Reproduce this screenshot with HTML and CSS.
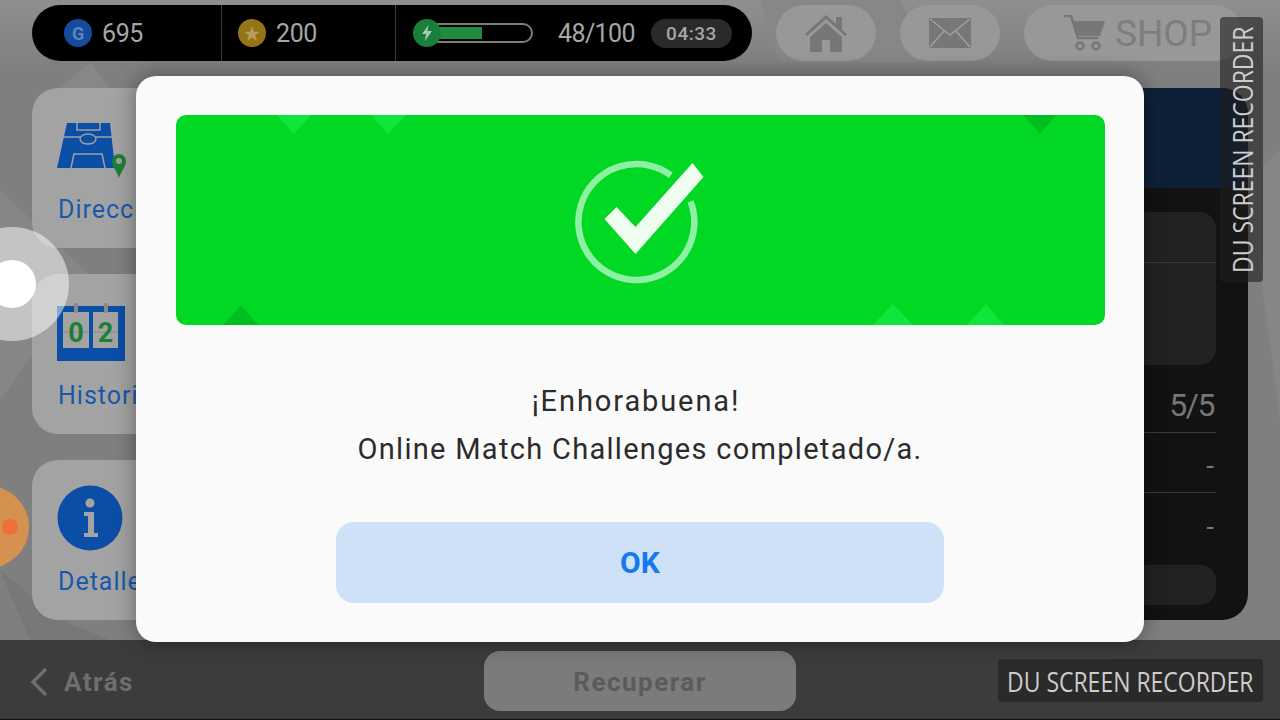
FILE: index.html
```html
<!DOCTYPE html>
<html lang="es">

<head>
    <meta charset="UTF-8">
    <meta name="viewport" content="width=device-width, initial-scale=1.0">
    <title>Online Match Challenges</title>
    <link rel="stylesheet" href="styles.css">
</head>

<body>
    <div class="screen">
        <svg class="backdrop" width="1280" height="640" viewBox="0 0 1280 640">
            <polygon points="0,190 90,275 0,400" fill="#868686" />
            <polygon points="60,88 110,88 90,62" fill="#878787" />
            <polygon points="1248,180 1280,150 1280,420" fill="#868686" />
            <polygon points="60,620 110,640 30,640 0,570" fill="#787878" />
            <polygon points="760,0 900,0 930,62 780,62" fill="#878787" />
        </svg>

        <header class="top">
            <div class="stats">
                <div class="stat stat-g">
                    <span class="coin coin-blue">G</span>
                    <span>695</span>
                </div>
                <div class="stat stat-gold">
                    <span class="coin coin-gold">★</span>
                    <span>200</span>
                </div>
                <div class="stat stat-energy">
                    <div class="energy">
                        <div class="energy-bar"><div class="energy-fill"></div></div>
                        <span class="coin coin-green">
                            <svg width="12" height="16" viewBox="0 0 12 16"><path d="M7.500 0 1 9h4l-1 7 7-10H6.500z" fill="#a9c9ae" /></svg>
                        </span>
                    </div>
                    <span class="energy-count">48/100</span>
                    <span class="timer">04:33</span>
                </div>
            </div>
            <button class="top-btn" aria-label="Inicio">
                <svg width="44" height="38" viewBox="0 0 44 38">
                    <path d="M1 20 22 1l10 9V3h6v13l5 4-2 2L22 5 3 22z" fill="#777" />
                    <path d="M6 23 22 9l16 14v15H26V26h-8v12H6z" fill="#777" />
                </svg>
            </button>
            <button class="top-btn" aria-label="Correo">
                <svg width="42" height="30" viewBox="0 0 42 30">
                    <path d="M0 0h42v30H0z" fill="#777" />
                    <path d="M1 1l20 16L41 1M1 29l14-16M41 29 27 13" fill="none" stroke="#a0a0a0" stroke-width="1.500" />
                </svg>
            </button>
            <button class="top-btn top-shop">
                <svg width="42" height="36" viewBox="0 0 42 36">
                    <path d="M0 1h7l7 22h20" fill="none" stroke="#777" stroke-width="2.500" />
                    <path d="M9 6h32l-5 15H14z" fill="#777" />
                    <circle cx="16" cy="31" r="3.500" fill="none" stroke="#777" stroke-width="2.500" />
                    <circle cx="32" cy="31" r="3.500" fill="none" stroke="#777" stroke-width="2.500" />
                </svg>
                <span>SHOP</span>
            </button>
        </header>

        <main class="middle">
            <nav class="side">
                <a class="card">
                    <div class="card-icon card-icon-pitch">
                        <svg width="69" height="55" viewBox="0 0 69 55">
                            <path d="M10 0h43l5 45H0z" fill="#0b4ea6" />
                            <path d="M6 14h50M20 0v7h23V0M14 45l3-14h28l3 14" fill="none" stroke="#a0a0a0" stroke-width="1.500" />
                            <ellipse cx="31" cy="16" rx="8" ry="5" fill="#0b4ea6" stroke="#a0a0a0" stroke-width="1.500" />
                            <path d="M55 38a7 7 0 0 1 14 0c0 6-4 8-7 17-3-9-7-11-7-17z" fill="#1c7f36" />
                            <circle cx="62" cy="38" r="3" fill="#a0a0a0" />
                        </svg>
                    </div>
                    <span class="card-label">Dirección</span>
                </a>
                <a class="card">
                    <div class="card-icon">
                        <svg width="68" height="58" viewBox="0 0 68 58">
                            <path d="M0 3h68v55H0z" fill="#0b4ea6" />
                            <path d="M6 9h26v36H6zM36 9h25v36H36z" fill="#a3a3a3" />
                            <path d="M6 29h26M36 29h25" stroke="#8a8a8a" stroke-width="1" />
                            <path d="M19 0v10M49 0v10" stroke="#8a8a8a" stroke-width="4" />
                            <text class="flip-num" x="19" y="39" text-anchor="middle">0</text>
                            <text class="flip-num" x="48.500" y="39" text-anchor="middle">2</text>
                        </svg>
                    </div>
                    <span class="card-label">Historial</span>
                </a>
                <a class="card">
                    <div class="card-icon">
                        <svg width="66" height="66" viewBox="0 0 66 66">
                            <circle cx="33" cy="33" r="32.500" fill="#0b4ea6" />
                            <circle cx="33" cy="18" r="4.500" fill="#a3a3a3" />
                            <path d="M27 27h10v21h4v4H27v-4h4V31h-4z" fill="#a3a3a3" />
                        </svg>
                    </div>
                    <span class="card-label">Detalles</span>
                </a>
            </nav>
            <section class="panel">
                <div class="panel-head"></div>
                <div class="panel-box">
                    <div class="panel-box-row"></div>
                </div>
                <div class="panel-row panel-row-big">5/5</div>
                <div class="panel-row">-</div>
                <div class="panel-row panel-row-last">-</div>
                <div class="panel-foot"></div>
            </section>
        </main>

        <footer class="bottom">
            <a class="back">
                <svg width="18" height="30" viewBox="0 0 18 30"><path d="M16 2 3 15l13 13" fill="none" stroke="#6e6e6e" stroke-width="3.500" /></svg>
                <span>Atrás</span>
            </a>
            <button class="recover">Recuperar</button>
        </footer>

        <div class="joystick"><div class="joystick-dot"></div></div>
        <div class="orange-btn"><div class="orange-dot"></div></div>

        <div class="modal">
            <div class="banner">
                <svg class="banner-bg" width="929" height="210" viewBox="0 0 929 210">
                    <polygon points="101,0 135,0 118,19" fill="#10e53c" />
                    <polygon points="195,0 230,0 212,19" fill="#10e53c" />
                    <polygon points="847,0 880,0 864,19" fill="#00bd20" />
                    <polygon points="47,210 82,210 65,190" fill="#00bd20" />
                    <polygon points="697,210 737,210 717,189" fill="#10e53c" />
                    <polygon points="791,210 828,210 810,189" fill="#10e53c" />
                </svg>
                <svg class="check" width="140" height="130" viewBox="0 0 140 130">
                    <path d="M100.800 20.300A58 58 0 1 0 120.600 46.400" fill="none" stroke="#8ef0a2" stroke-width="6.500" />
                    <path d="M34.500 64 46.500 52 65.500 72 122.500 8 133.500 22 65.500 99z" fill="#eefdf0" />
                </svg>
            </div>
            <p class="message"><span class="message-head">¡Enhorabuena!</span><br>Online Match Challenges completado/a.</p>
            <button class="ok">OK</button>
        </div>

        <div class="mark mark-side"><span class="mark-text">DU SCREEN RECORDER</span></div>
        <div class="mark mark-bottom"><span class="mark-text">DU SCREEN RECORDER</span></div>
    </div>
</body>

</html>
```

FILE: styles.css
```css
* {
    box-sizing: border-box;
}

body {
    margin: 0;
    font-family: 'Roboto', 'Liberation Sans', sans-serif;
}

button {
    font-family: inherit;
    border: none;
    padding: 0;
}

.screen {
    position: relative;
    width: 1280px;
    height: 720px;
    overflow: hidden;
    display: flex;
    flex-direction: column;
    background: linear-gradient(180deg, #8f8f8f 0, #7f7f7f 70px, #7f7f7f 100%);
}

.backdrop {
    position: absolute;
    top: 0;
    left: 0;
}

.top {
    position: relative;
    display: flex;
    gap: 24px;
    padding: 5px 0 0 32px;
    height: 61px;
}

.stats {
    display: flex;
    width: 720px;
    height: 56px;
    background: #000;
    border-radius: 28px;
    color: #a6a6a6;
    font-size: 25px;
    letter-spacing: -0.4px;
}

.stat {
    display: flex;
    align-items: center;
    gap: 10px;
    border-right: 1px solid #3a3a3a;
}

.stat-g {
    width: 190px;
    padding-left: 32px;
}

.stat-gold {
    width: 174px;
    padding-left: 16px;
}

.stat-energy {
    border-right: none;
    padding-left: 17px;
    gap: 0;
}

.coin {
    width: 28px;
    height: 28px;
    border-radius: 50%;
    display: flex;
    align-items: center;
    justify-content: center;
    flex-shrink: 0;
    font-size: 18px;
    font-weight: 700;
}

.coin-blue {
    background: #154a9c;
    color: #5d84bb;
}

.coin-gold {
    background: #947414;
    color: #b79e5c;
}

.coin-green {
    position: absolute;
    top: 0;
    left: 0;
    background: #1a7f3a;
}

.energy {
    position: relative;
    width: 120px;
    height: 28px;
    display: flex;
    align-items: center;
    padding-left: 14px;
}

.energy-bar {
    width: 106px;
    height: 20px;
    border: 2px solid #7d7d7d;
    border-radius: 0 10px 10px 0;
    padding: 2px 0 2px 2px;
}

.energy-fill {
    width: 51px;
    height: 100%;
    background: #1f8c40;
}

.energy-count {
    margin-left: 25px;
    letter-spacing: -0.6px;
}

.timer {
    margin-left: 16px;
    width: 81px;
    height: 29px;
    border-radius: 15px;
    background: #2a2a2a;
    font-size: 19px;
    font-weight: 500;
    letter-spacing: 0.5px;
    display: flex;
    align-items: center;
    justify-content: center;
}

.top-btn {
    width: 100px;
    height: 56px;
    border-radius: 28px;
    background: #989898;
    display: flex;
    align-items: center;
    justify-content: center;
}

.top-shop {
    width: 219px;
    gap: 9px;
    justify-content: flex-start;
    padding-left: 40px;
    color: #7d7d7d;
    font-size: 37px;
}

.middle {
    position: relative;
    flex: 1;
    display: flex;
    justify-content: space-between;
    padding: 27px 32px 20px;
}

.side {
    display: flex;
    flex-direction: column;
    gap: 26px;
    width: 200px;
}

.card {
    flex: 1;
    display: flex;
    flex-direction: column;
    align-items: flex-start;
    background: #a3a3a3;
    border-radius: 26px;
    padding: 23px 0 0 25px;
    color: #1858ab;
    font-size: 25px;
    letter-spacing: 1px;
}

.card-icon {
    height: 70px;
    display: flex;
    align-items: center;
}

.card-icon-pitch {
    padding-top: 8px;
}

.card-label {
    margin-top: 14px;
    padding-left: 1px;
    line-height: 30px;
}

.flip-num {
    font-size: 27px;
    font-weight: 700;
    letter-spacing: 0;
    fill: #1c7f36;
}

.panel {
    width: 300px;
    height: 532px;
    background: #121212;
    border-radius: 0 26px 26px 0;
    overflow: hidden;
    display: flex;
    flex-direction: column;
    align-items: stretch;
    color: #767676;
    font-size: 28px;
}

.panel-head {
    height: 100px;
    background: #0e2038;
}

.panel-box {
    margin: 24px 32px 0 0;
    height: 153px;
    background: #222;
    border-radius: 0 16px 16px 0;
}

.panel-box-row {
    height: 51px;
    border-bottom: 1px solid #3a3a3a;
}

.panel-row {
    margin-right: 32px;
    height: 60px;
    padding: 6px 2px 0 0;
    display: flex;
    align-items: center;
    justify-content: flex-end;
    border-bottom: 1px solid #3a3a3a;
}

.panel-row-big {
    height: 68px;
    padding-top: 12px;
    font-size: 32px;
    letter-spacing: -1.5px;
}

.panel-row-last {
    border-bottom: none;
    height: 72px;
    padding-bottom: 12px;
}

.panel-foot {
    margin-right: 32px;
    height: 40px;
    background: #222;
    border-radius: 0 16px 16px 0;
}

.bottom {
    position: relative;
    height: 80px;
    background: #3c3c3c;
    border-bottom: 1px solid #111;
    display: flex;
    align-items: center;
}

.back {
    width: 484px;
    display: flex;
    align-items: center;
    gap: 16px;
    padding: 4px 0 0 30px;
    color: #6e6e6e;
    font-size: 26px;
    font-weight: 700;
    letter-spacing: 1.5px;
}

.recover {
    width: 312px;
    height: 60px;
    margin-top: 3px;
    padding-top: 2px;
    border-radius: 16px;
    background: #7b7b7b;
    color: #5b5b5b;
    font-size: 26px;
    font-weight: 700;
    letter-spacing: 1.500px;
}

.joystick {
    position: absolute;
    left: -45px;
    top: 227px;
    width: 114px;
    height: 114px;
    border-radius: 50%;
    background: rgba(255, 255, 255, 0.5);
    display: flex;
    align-items: center;
    justify-content: center;
}

.joystick-dot {
    width: 48px;
    height: 48px;
    border-radius: 50%;
    background: #fff;
}

.orange-btn {
    position: absolute;
    left: -53px;
    top: 486px;
    width: 82px;
    height: 82px;
    border-radius: 50%;
    background: #d4914f;
    display: flex;
    align-items: center;
    justify-content: flex-end;
    padding-right: 11px;
}

.orange-dot {
    width: 16px;
    height: 16px;
    border-radius: 50%;
    background: #ee6f37;
}

.modal {
    position: absolute;
    left: 136px;
    top: 76px;
    width: 1008px;
    height: 566px;
    background: #fafafa;
    border-radius: 20px;
    box-shadow: 0 0 22px rgba(0, 0, 0, 0.4);
    display: flex;
    flex-direction: column;
    align-items: center;
    padding-top: 39px;
}

.banner {
    position: relative;
    width: 929px;
    height: 210px;
    background: #00d824;
    border-radius: 10px;
    overflow: hidden;
    display: flex;
    align-items: center;
    justify-content: center;
}

.banner-bg {
    position: absolute;
    top: 0;
    left: 0;
}

.check {
    position: relative;
}

.message {
    margin: 52px 0 0;
    text-align: center;
    color: #2b2b2b;
    font-size: 29px;
    line-height: 48px;
    letter-spacing: 1.3px;
}

.message-head {
    margin-left: -8px;
    letter-spacing: 1.9px;
}

.ok {
    margin-top: 49px;
    width: 608px;
    height: 81px;
    border-radius: 18px;
    background: #cfe1f6;
    color: #1478ee;
    font-size: 30px;
    font-weight: 700;
}

.mark {
    position: absolute;
    width: 265px;
    height: 43px;
    background: rgba(30, 30, 30, 0.6);
    color: #cdcdcd;
    font-family: 'Open Sans', sans-serif;
    font-size: 28px;
    white-space: nowrap;
    border-radius: 4px;
    display: flex;
    align-items: center;
    justify-content: center;
}

.mark-text {
    display: inline-block;
    transform: scaleX(0.82);
}

.mark-side {
    left: 1109px;
    top: 128px;
    transform: rotate(-90deg);
}

.mark-bottom {
    left: 998px;
    top: 659px;
}
```
